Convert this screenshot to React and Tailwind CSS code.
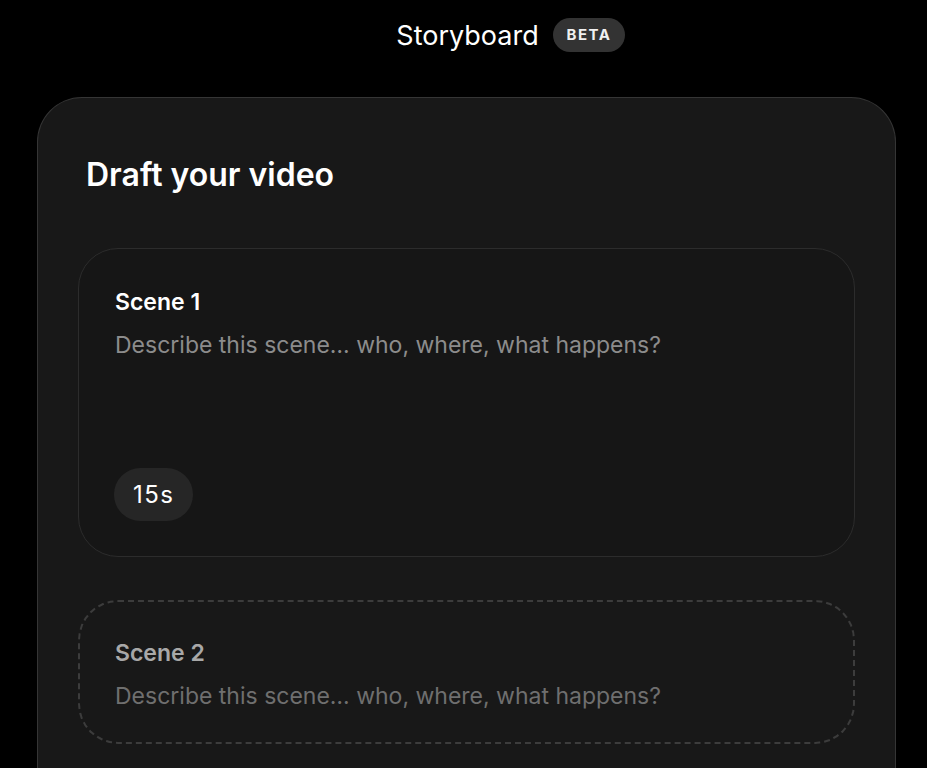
const font = { fontFamily: 'Inter, "Noto Sans", sans-serif' };

const SceneCard = ({ index, active, duration }) => (
  <div
    className={`rounded-[40px] ${
      active
        ? 'border border-[#2c2c2c] bg-[#161616] px-[36px] pb-[35px] pt-[39px]'
        : 'border-2 border-dashed border-[#3c3c3c] px-[35px] pb-[32px] pt-[37px]'
    }`}
  >
    <p className={`text-[23px] font-semibold leading-[28px] ${active ? 'text-white' : 'text-[#a8a8a8]'}`}>
      Scene {index}
    </p>
    <p className={`mt-[15px] text-[23px] leading-[28px] ${active ? 'text-[#8c8c8c]' : 'text-[#6f6f6f]'}`}>
      Describe this scene… who, where, what happens?
    </p>
    {active && (
      <div className="mt-[109px] flex">
        <span className="-ml-[1px] flex h-[53px] items-center rounded-full bg-[#262626] px-[19px] text-[24px] tracking-[0.06em] text-white">
          {duration}
        </span>
      </div>
    )}
  </div>
);

export default function App() {
  return (
    <div className="min-h-[768px] bg-black" style={font}>
      <header className="relative flex h-[72px] items-center justify-center pl-[8px]">
        <h1 className="text-[27px] font-normal text-white">Storyboard</h1>
        <span className="absolute left-[553px] top-[18px] flex h-[34px] w-[72px] items-center justify-center rounded-full bg-[#333333] text-[15px] font-bold tracking-[0.1em] text-[#f0f0f0]">
          BETA
        </span>
      </header>

      <main className="ml-[37px] mt-[25px] w-[859px] rounded-t-[45px] border border-b-0 border-[#353535] bg-[#181818] px-[40px] pb-10 pt-[57px]">
        <h2 className="ml-[8px] text-[32px] font-semibold leading-[40px] text-white">Draft your video</h2>
        <div className="mt-[53px] flex flex-col gap-[43px]">
          <SceneCard index={1} active duration="15s" />
          <SceneCard index={2} />
        </div>
      </main>
    </div>
  );
}
